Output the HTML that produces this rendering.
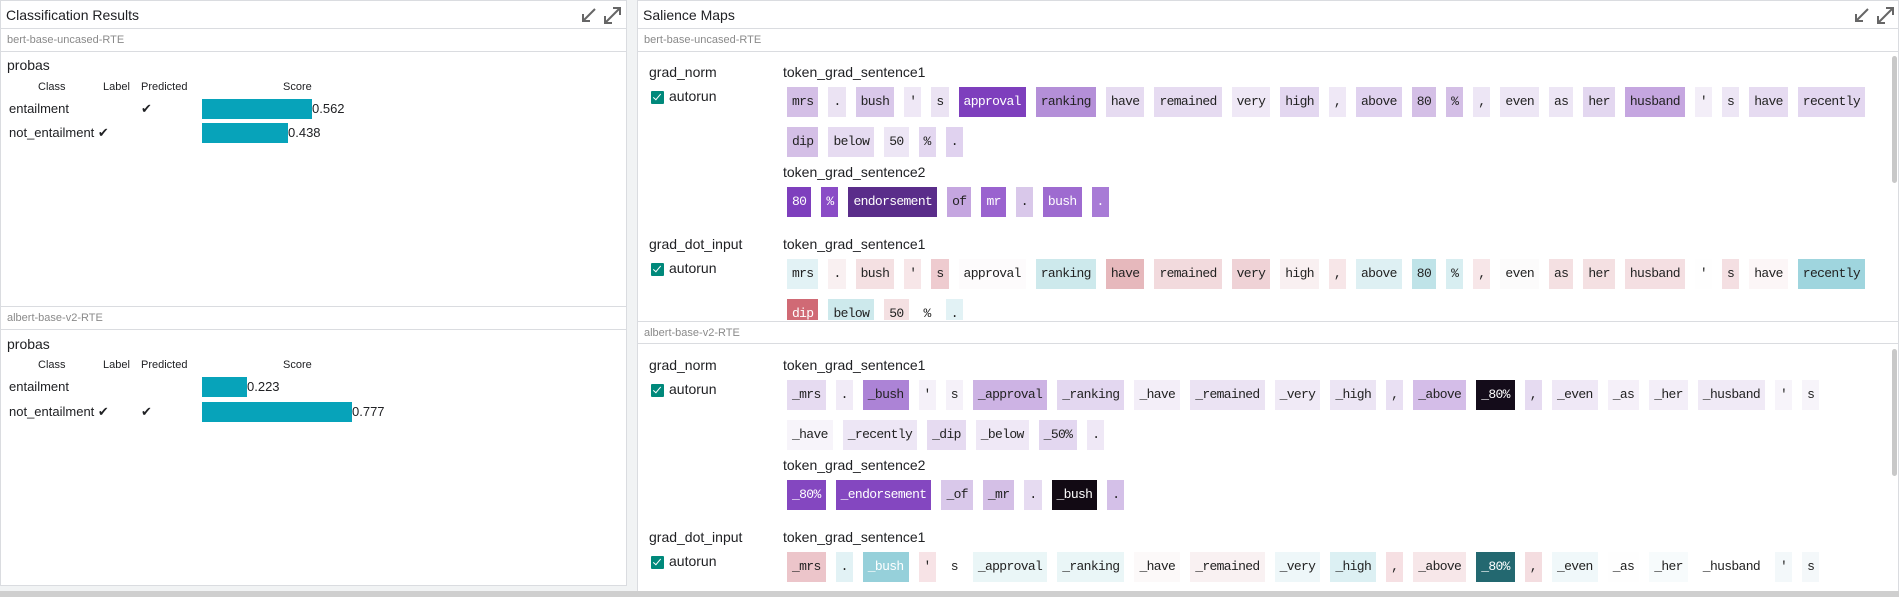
<!DOCTYPE html>
<html><head><meta charset="utf-8"><style>
*{margin:0;padding:0;box-sizing:border-box}
html,body{width:1899px;height:597px;overflow:hidden}
body{background:#f1f3f4;font-family:"Liberation Sans",sans-serif;color:#202124;position:relative}
.a{position:absolute}
.panel{position:absolute;background:#fff;border:1px solid #dadce0}
.hdr{position:absolute;left:0;right:0;top:0;height:28px;border-bottom:1px solid #dadce0;font-size:14px;line-height:28px;padding-left:5px}
.mdl{position:absolute;left:0;right:0;height:23px;border-bottom:1px solid #dadce0;font-size:11px;color:#8a8a8a;line-height:23px;padding-left:6px;background:#fff}
.row{position:absolute;left:787px;white-space:nowrap;height:30px}
.c{display:inline-block;height:30px;line-height:30px;padding:0 5px;margin-right:10px;font-family:"Liberation Mono",monospace;font-size:13px;letter-spacing:-0.65px;white-space:pre;color:#222;vertical-align:top}
.w{color:#fff}
.lbl{position:absolute;font-size:14px}
.cb{position:absolute;width:13px;height:13px;background:#00897b;border-radius:1px}
.cb:after{content:"";position:absolute;left:4px;top:1px;width:3px;height:7px;border:solid #fff;border-width:0 1.5px 1.5px 0;transform:rotate(40deg)}
.bar{position:absolute;height:20px;background:#07a3ba}
.sm{position:absolute;font-size:11px}
.t{position:absolute;font-size:13px}
</style></head><body>

<div class="panel" style="left:0;top:0;width:627px;height:586px">
 <div class="hdr">Classification Results</div>
 <svg class="a" style="left:578px;top:5px" width="46" height="20" viewBox="0 0 46 20" fill="none" stroke="#666" stroke-width="2"><path d="M16 3 L4 15 M4 8 V15 H11"/><path d="M26 17 L41 2 M34 2 H41 V9 M26 10 V17 H33"/></svg>
 <div class="mdl" style="top:28px">bert-base-uncased-RTE</div>
 <div class="lbl" style="left:6px;top:56px;font-size:14px">probas</div>
 <div class="sm" style="left:37px;top:80px">Class</div>
 <div class="sm" style="left:102px;top:80px">Label</div>
 <div class="sm" style="left:140px;top:80px">Predicted</div>
 <div class="sm" style="left:282px;top:80px">Score</div>
 <div class="t" style="left:8px;top:100px">entailment</div>
 <div class="t" style="left:140px;top:100px">✔</div>
 <div class="bar" style="left:201px;top:98px;width:110px"></div>
 <div class="t" style="left:311px;top:100px">0.562</div>
 <div class="t" style="left:8px;top:124px">not_entailment ✔</div>
 <div class="bar" style="left:201px;top:122px;width:86px"></div>
 <div class="t" style="left:287px;top:124px">0.438</div>

 <div class="a" style="left:0;right:0;top:305px;border-top:1px solid #dadce0"></div>
 <div class="mdl" style="top:306px">albert-base-v2-RTE</div>
 <div class="lbl" style="left:6px;top:335px">probas</div>
 <div class="sm" style="left:37px;top:358px">Class</div>
 <div class="sm" style="left:102px;top:358px">Label</div>
 <div class="sm" style="left:140px;top:358px">Predicted</div>
 <div class="sm" style="left:282px;top:358px">Score</div>
 <div class="t" style="left:8px;top:378px">entailment</div>
 <div class="bar" style="left:201px;top:376px;width:45px"></div>
 <div class="t" style="left:246px;top:378px">0.223</div>
 <div class="t" style="left:8px;top:403px">not_entailment ✔</div>
 <div class="t" style="left:140px;top:403px">✔</div>
 <div class="bar" style="left:201px;top:401px;width:150px"></div>
 <div class="t" style="left:351px;top:403px">0.777</div>
</div>

<div class="panel" style="left:637px;top:0;width:1262px;height:592px;overflow:hidden">
 <div class="hdr">Salience Maps</div>
 <svg class="a" style="left:1214px;top:5px" width="46" height="20" viewBox="0 0 46 20" fill="none" stroke="#666" stroke-width="2"><path d="M16 3 L4 15 M4 8 V15 H11"/><path d="M26 17 L41 2 M34 2 H41 V9 M26 10 V17 H33"/></svg>
 <div class="mdl" style="top:28px">bert-base-uncased-RTE</div>
 <div class="mdl" style="top:320px;border-top:1px solid #dadce0">albert-base-v2-RTE</div>
 <div class="a" style="left:1254px;top:55px;width:5px;height:127px;background:#c8c8c8;border-radius:3px"></div>
 <div class="a" style="left:1254px;top:348px;width:5px;height:127px;background:#c8c8c8;border-radius:3px"></div>
</div>

<div class="a" style="left:637px;top:51px;width:1250px;height:269px;overflow:hidden">
 <div style="position:absolute;left:-637px;top:-51px;width:1899px;height:400px">
 <div class="lbl" style="left:649px;top:64px">grad_norm</div>
 <div class="cb" style="left:651px;top:91px"></div>
 <div class="lbl" style="left:669px;top:88px">autorun</div>
 <div class="lbl" style="left:783px;top:64px">token_grad_sentence1</div>
 <div class="row" style="top:87px"><span class="c" style="background:#d4bfe6">mrs</span><span class="c" style="background:#ebe3f3">.</span><span class="c" style="background:#d9c8ea">bush</span><span class="c" style="background:#efe8f6">'</span><span class="c" style="background:#ebe3f3">s</span><span class="c w" style="background:#7e3fbd">approval</span><span class="c" style="background:#b48fd8">ranking</span><span class="c" style="background:#e6dbf1">have</span><span class="c" style="background:#e6dbf1">remained</span><span class="c" style="background:#efe8f6">very</span><span class="c" style="background:#e3d7f0">high</span><span class="c" style="background:#efe8f6">,</span><span class="c" style="background:#e0d2ef">above</span><span class="c" style="background:#d4bfe6">80</span><span class="c" style="background:#d4bfe6">%</span><span class="c" style="background:#ede6f5">,</span><span class="c" style="background:#ede6f5">even</span><span class="c" style="background:#ede6f5">as</span><span class="c" style="background:#e3d7f0">her</span><span class="c" style="background:#c5a6e0">husband</span><span class="c" style="background:#f3eef8">'</span><span class="c" style="background:#ede6f5">s</span><span class="c" style="background:#e6dbf1">have</span><span class="c" style="background:#e3d7f0">recently</span></div>
 <div class="row" style="top:127px"><span class="c" style="background:#d4bfe6">dip</span><span class="c" style="background:#e6dbf1">below</span><span class="c" style="background:#ede6f5">50</span><span class="c" style="background:#e3d7f0">%</span><span class="c" style="background:#e0d2ef">.</span></div>
 <div class="lbl" style="left:783px;top:164px">token_grad_sentence2</div>
 <div class="row" style="top:187px"><span class="c w" style="background:#7e3fbd">80</span><span class="c w" style="background:#8a4cc6">%</span><span class="c w" style="background:#5a2d8a">endorsement</span><span class="c" style="background:#c5a6e0">of</span><span class="c w" style="background:#9a63cf">mr</span><span class="c" style="background:#d9c8ea">.</span><span class="c w" style="background:#9e6bd0">bush</span><span class="c w" style="background:#a87bd6">.</span></div>
 <div class="lbl" style="left:649px;top:236px">grad_dot_input</div>
 <div class="cb" style="left:651px;top:263px"></div>
 <div class="lbl" style="left:669px;top:260px">autorun</div>
 <div class="lbl" style="left:783px;top:236px">token_grad_sentence1</div>
 <div class="row" style="top:259px"><span class="c" style="background:#e2f2f5">mrs</span><span class="c" style="background:#f9f0f1">.</span><span class="c" style="background:#f4e0e2">bush</span><span class="c" style="background:#f7e6e8">'</span><span class="c" style="background:#eecbcf">s</span><span class="c" style="background:#fdfbfc">approval</span><span class="c" style="background:#cde9ec">ranking</span><span class="c" style="background:#e6b8bc">have</span><span class="c" style="background:#f2dadd">remained</span><span class="c" style="background:#efd2d6">very</span><span class="c" style="background:#f9f0f1">high</span><span class="c" style="background:#f7e6e8">,</span><span class="c" style="background:#def0f3">above</span><span class="c" style="background:#bfe3e8">80</span><span class="c" style="background:#d8eef1">%</span><span class="c" style="background:#f7e6e8">,</span><span class="c" style="background:#fcfbfb">even</span><span class="c" style="background:#f4e0e2">as</span><span class="c" style="background:#f4e0e2">her</span><span class="c" style="background:#f4dfe2">husband</span><span class="c" style="background:#fefefe">'</span><span class="c" style="background:#f4dfe2">s</span><span class="c" style="background:#fcf6f7">have</span><span class="c" style="background:#9fd5de">recently</span></div>
 <div class="row" style="top:299px"><span class="c w" style="background:#d06a75">dip</span><span class="c" style="background:#cde9ec">below</span><span class="c" style="background:#f4e0e2">50</span><span class="c" style="background:#fff">%</span><span class="c" style="background:#e2f2f5">.</span></div>
 </div>
</div>

<div class="a" style="left:637px;top:344px;width:1250px;height:247px;overflow:hidden">
 <div style="position:absolute;left:-637px;top:-344px;width:1899px;height:600px">
 <div class="lbl" style="left:649px;top:357px">grad_norm</div>
 <div class="cb" style="left:651px;top:384px"></div>
 <div class="lbl" style="left:669px;top:381px">autorun</div>
 <div class="lbl" style="left:783px;top:357px">token_grad_sentence1</div>
 <div class="row" style="top:380px"><span class="c" style="background:#e6dbf1">_mrs</span><span class="c" style="background:#f1ebf7">.</span><span class="c" style="background:#ac83d6">_bush</span><span class="c" style="background:#f5f1f9">'</span><span class="c" style="background:#f5f1f9">s</span><span class="c" style="background:#cdb3e4">_approval</span><span class="c" style="background:#e3d7f0">_ranking</span><span class="c" style="background:#f3eef8">_have</span><span class="c" style="background:#ebe3f3">_remained</span><span class="c" style="background:#f0eaf6">_very</span><span class="c" style="background:#ece5f4">_high</span><span class="c" style="background:#e9e0f3">,</span><span class="c" style="background:#d4bde8">_above</span><span class="c w" style="background:#140c1a">_80%</span><span class="c" style="background:#e6dbf1">,</span><span class="c" style="background:#efe8f6">_even</span><span class="c" style="background:#f5f0f9">_as</span><span class="c" style="background:#f3eef8">_her</span><span class="c" style="background:#f0eaf6">_husband</span><span class="c" style="background:#f7f4fa">'</span><span class="c" style="background:#f7f4fa">s</span></div>
 <div class="row" style="top:420px"><span class="c" style="background:#f7f4fa">_have</span><span class="c" style="background:#ede6f5">_recently</span><span class="c" style="background:#e6dbf1">_dip</span><span class="c" style="background:#efe8f6">_below</span><span class="c" style="background:#e3d7f0">_50%</span><span class="c" style="background:#efe8f6">.</span></div>
 <div class="lbl" style="left:783px;top:457px">token_grad_sentence2</div>
 <div class="row" style="top:480px"><span class="c w" style="background:#8447c0">_80%</span><span class="c w" style="background:#8447c0">_endorsement</span><span class="c" style="background:#d9c8ea">_of</span><span class="c" style="background:#d4bfe6">_mr</span><span class="c" style="background:#e6dbf1">.</span><span class="c w" style="background:#120a14">_bush</span><span class="c" style="background:#d4c0e8">.</span></div>
 <div class="lbl" style="left:649px;top:529px">grad_dot_input</div>
 <div class="cb" style="left:651px;top:556px"></div>
 <div class="lbl" style="left:669px;top:553px">autorun</div>
 <div class="lbl" style="left:783px;top:529px">token_grad_sentence1</div>
 <div class="row" style="top:552px"><span class="c" style="background:#ecc5ca">_mrs</span><span class="c" style="background:#e2f2f5">.</span><span class="c w" style="background:#96d0da">_bush</span><span class="c" style="background:#f7e3e6">'</span><span class="c" style="background:#fff">s</span><span class="c" style="background:#eaf6f7">_approval</span><span class="c" style="background:#eaf6f7">_ranking</span><span class="c" style="background:#fcf9f9">_have</span><span class="c" style="background:#f9f1f2">_remained</span><span class="c" style="background:#eef7f9">_very</span><span class="c" style="background:#dcf0f3">_high</span><span class="c" style="background:#f6e0e3">,</span><span class="c" style="background:#f7e7e9">_above</span><span class="c w" style="background:#236870">_80%</span><span class="c" style="background:#f4dde0">,</span><span class="c" style="background:#f0f8fa">_even</span><span class="c" style="background:#fefefe">_as</span><span class="c" style="background:#f7fbfc">_her</span><span class="c" style="background:#fff">_husband</span><span class="c" style="background:#f3f8fa">'</span><span class="c" style="background:#f4f8fa">s</span></div>
 </div>
</div>

<div class="a" style="left:0;top:591px;width:1899px;height:6px;background:#cfcfcf"></div>
</body></html>
